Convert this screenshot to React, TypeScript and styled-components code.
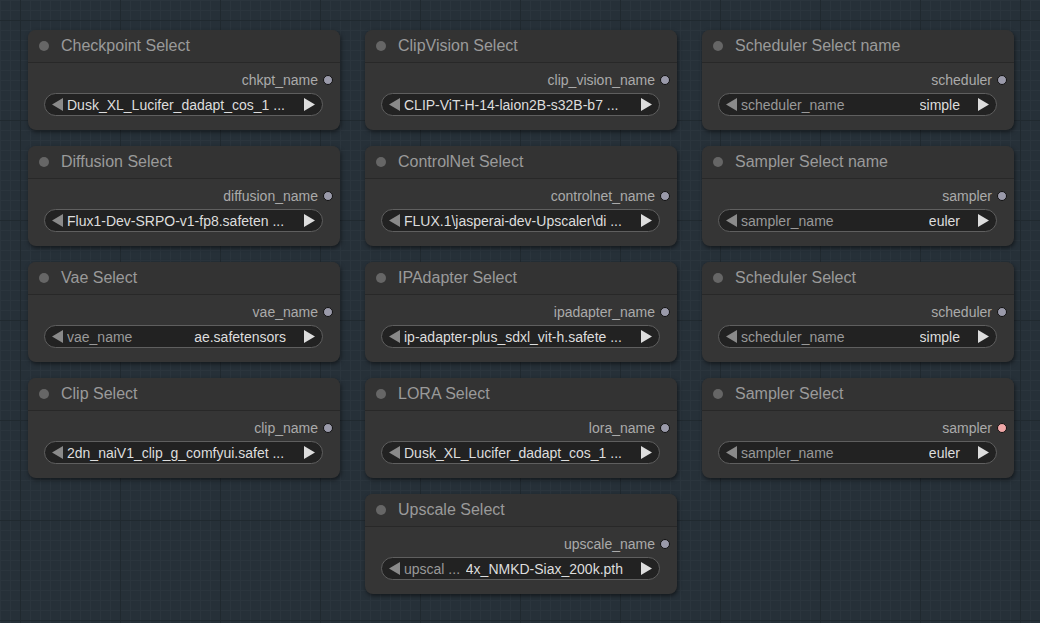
import React from "react";
import styled, { createGlobalStyle } from "styled-components";

const Global = createGlobalStyle`
    html, body { margin: 0; padding: 0; }
    body {
        width: 1040px;
        height: 623px;
        overflow: hidden;
        font-family: Arial, "Liberation Sans", sans-serif;
        background-color: #263038;
        background-image:
            linear-gradient(#20292f 1px, transparent 1px),
            linear-gradient(90deg, #20292f 1px, transparent 1px),
            linear-gradient(#2b353d 1px, transparent 1px),
            linear-gradient(90deg, #2b353d 1px, transparent 1px);
        background-size: 100px 100px, 100px 100px, 10px 10px, 10px 10px;
        background-position: 20px 20px, 20px 20px, 0 0, 0 0;
    }
`;

type Widget = { label?: string; value: string; trunc?: boolean };
type NodeData = { title: string; output: string; dot?: string; widget: Widget; col: number; row: number };

const nodes: NodeData[] = [
    { title: "Checkpoint Select", output: "chkpt_name", widget: { value: "Dusk_XL_Lucifer_dadapt_cos_1 ...", trunc: true }, col: 1, row: 1 },
    { title: "Diffusion Select", output: "diffusion_name", widget: { value: "Flux1-Dev-SRPO-v1-fp8.safeten ...", trunc: true }, col: 1, row: 2 },
    { title: "Vae Select", output: "vae_name", widget: { label: "vae_name", value: "ae.safetensors" }, col: 1, row: 3 },
    { title: "Clip Select", output: "clip_name", widget: { value: "2dn_naiV1_clip_g_comfyui.safet ...", trunc: true }, col: 1, row: 4 },
    { title: "ClipVision Select", output: "clip_vision_name", widget: { value: "CLIP-ViT-H-14-laion2B-s32B-b7  ...", trunc: true }, col: 2, row: 1 },
    { title: "ControlNet Select", output: "controlnet_name", widget: { value: "FLUX.1\\jasperai-dev-Upscaler\\di ...", trunc: true }, col: 2, row: 2 },
    { title: "IPAdapter Select", output: "ipadapter_name", widget: { value: "ip-adapter-plus_sdxl_vit-h.safete ...", trunc: true }, col: 2, row: 3 },
    { title: "LORA Select", output: "lora_name", widget: { value: "Dusk_XL_Lucifer_dadapt_cos_1 ...", trunc: true }, col: 2, row: 4 },
    { title: "Upscale Select", output: "upscale_name", widget: { label: "upscal ...", value: "4x_NMKD-Siax_200k.pth" }, col: 2, row: 5 },
    { title: "Scheduler Select name", output: "scheduler", widget: { label: "scheduler_name", value: "simple" }, col: 3, row: 1 },
    { title: "Sampler Select name", output: "sampler", widget: { label: "sampler_name", value: "euler" }, col: 3, row: 2 },
    { title: "Scheduler Select", output: "scheduler", widget: { label: "scheduler_name", value: "simple" }, col: 3, row: 3 },
    { title: "Sampler Select", output: "sampler", dot: "#f0a8a8", widget: { label: "sampler_name", value: "euler" }, col: 3, row: 4 },
];

const Canvas = styled.div`
    display: grid;
    grid-template-columns: repeat(3, 312px);
    grid-auto-rows: 100px;
    column-gap: 25px;
    row-gap: 16px;
    padding: 30px 0 0 28px;
`;

const Node = styled.div<{ $col: number; $row: number }>`
    grid-column: ${(p) => p.$col};
    grid-row: ${(p) => p.$row};
    background: #353535;
    border-radius: 8px;
    box-shadow: 1px 2px 4px rgba(0, 0, 0, 0.5);
    display: flex;
    flex-direction: column;
    overflow: hidden;
`;

const Title = styled.div`
    height: 32px;
    display: flex;
    align-items: center;
    gap: 12px;
    padding-left: 11px;
    background: #333;
    border-bottom: 1px solid #282828;
    color: #9a9a9a;
    font-size: 16px;
`;

const TitleDot = styled.span`
    width: 10px;
    height: 10px;
    border-radius: 50%;
    background: #666;
`;

const OutputRow = styled.div`
    display: flex;
    justify-content: flex-end;
    align-items: center;
    gap: 5px;
    height: 24px;
    padding: 5px 7px 0 0;
    color: #aaa;
    font-size: 14px;
`;

const Slot = styled.span<{ $color?: string }>`
    width: 8px;
    height: 8px;
    border-radius: 50%;
    background: ${(p) => p.$color || "#9a9aaa"};
    border: 1px solid #111;
`;

const WidgetBox = styled.div`
    margin: 1px 17px 0 16px;
    height: 21px;
    border: 1px solid #5f5f5f;
    border-radius: 12px;
    background: #222;
    display: flex;
    align-items: center;
    padding: 0 7px 0 7px;
    font-size: 14px;
    gap: 3px;
    white-space: nowrap;
    overflow: hidden;
`;

const Arrow = styled.svg<{ $dim?: boolean }>`
    width: 12px;
    height: 13px;
    flex: none;
    fill: ${(p) => (p.$dim ? "#8a8a8a" : "#ddd")};
`;

const Label = styled.span`
    color: #999;
    flex: 1;
    overflow: hidden;
`;

const Value = styled.span<{ $trunc?: boolean }>`
    color: #ddd;
    flex: ${(p) => (p.$trunc ? 1 : "none")};
    overflow: hidden;
    padding-right: 14px;
`;

export default function App() {
    return (
        <>
            <Global />
            <Canvas>
                {nodes.map((n) => (
                    <Node key={n.title} $col={n.col} $row={n.row}>
                        <Title>
                            <TitleDot />
                            {n.title}
                        </Title>
                        <OutputRow>
                            {n.output}
                            <Slot $color={n.dot} />
                        </OutputRow>
                        <WidgetBox>
                            <Arrow $dim viewBox="0 0 12 13">
                                <path d="M11 0 L11 13 L0 6.5 Z" />
                            </Arrow>
                            {n.widget.label && <Label>{n.widget.label}</Label>}
                            <Value $trunc={n.widget.trunc}>{n.widget.value}</Value>
                            <Arrow viewBox="0 0 12 13">
                                <path d="M1 0 L1 13 L12 6.5 Z" />
                            </Arrow>
                        </WidgetBox>
                    </Node>
                ))}
            </Canvas>
        </>
    );
}
